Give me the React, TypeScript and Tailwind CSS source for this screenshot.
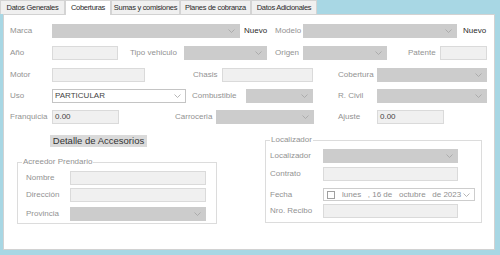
import type { ReactNode } from "react";

const Chevron = () => (
  <svg width="7" height="4" viewBox="0 0 7 4" className="shrink-0 mr-[4px]">
    <polyline points="0.5,0.5 3.5,3.5 6.5,0.5" fill="none" stroke="#a3a3a3" strokeWidth="0.8" />
  </svg>
);

function Label({ className = "", dark, children }: { className?: string; dark?: boolean; children: ReactNode }) {
  return (
    <span className={`shrink-0 whitespace-nowrap leading-[14px] ${dark ? "text-[#2b2b2b]" : "text-[#929292]"} ${className}`}>
      {children}
    </span>
  );
}

function Combo({ className = "", enabled, text }: { className?: string; enabled?: boolean; text?: string }) {
  return (
    <div
      className={`shrink-0 h-[14px] flex items-center justify-between border ${
        enabled ? "bg-white border-[#c4c4c4]" : "bg-[#cccccc] border-[#cccccc]"
      } ${className}`}
    >
      <span className="pl-[2px] text-[#444] leading-[12px]">{text}</span>
      <Chevron />
    </div>
  );
}

function TextBox({ className = "", text }: { className?: string; text?: string }) {
  return (
    <div className={`shrink-0 h-[14px] bg-[#f0f0f0] border border-[#dadada] flex items-center ${className}`}>
      <span className="pl-[2px] text-[#444] leading-[12px]">{text}</span>
    </div>
  );
}

const tabs = [
  { name: "Datos Generales", w: "w-[65px]" },
  { name: "Coberturas", w: "w-[46px]", active: true },
  { name: "Sumas y comisiones", w: "w-[69px]" },
  { name: "Planes de cobranza", w: "w-[71px]" },
  { name: "Datos Adicionales", w: "w-[66px]" },
];

export default function App() {
  return (
    <div className="w-[500px] h-[255px] bg-[#a8d7e4] overflow-hidden font-['Liberation_Sans',Arial,sans-serif] text-[8px]">
      {/* Tabs */}
      <div className="flex h-[14px] items-end">
        {tabs.map((t) => (
          <div
            key={t.name}
            className={`${t.w} shrink-0 text-center whitespace-nowrap text-[#2a2a2a] text-[7.5px] tracking-[-0.3px] border border-[#d4d4d4] border-b-0 leading-[13px] ${
              t.active ? "relative z-10 h-[15px] -mb-px bg-white" : "h-[14px] bg-[#f0f0f0]"
            }`}
          >
            {t.name}
          </div>
        ))}
      </div>

      {/* Panel */}
      <div className="ml-[3px] w-[492px] h-[236px] bg-white border border-[#d2d2d2]">
        {/* Row 1 */}
        <div className="flex items-center h-[14px] mt-[9px]">
          <Label className="ml-[6px] w-[42px]">Marca</Label>
          <Combo className="w-[188px]" />
          <Label dark className="ml-[4px] w-[31px]">Nuevo</Label>
          <Label className="w-[28px]">Modelo</Label>
          <Combo className="w-[154px]" />
          <Label dark className="ml-[6px]">Nuevo</Label>
        </div>

        {/* Row 2 */}
        <div className="flex items-center h-[14px] mt-[8px]">
          <Label className="ml-[6px] w-[42px]">Año</Label>
          <TextBox className="w-[66px]" />
          <Label className="ml-[12px] w-[54px]">Tipo vehiculo</Label>
          <Combo className="w-[83px]" />
          <Label className="ml-[8px] w-[28px]">Origen</Label>
          <Combo className="w-[84px]" />
          <Label className="ml-[21px] w-[32px]">Patente</Label>
          <TextBox className="w-[47px]" />
        </div>

        {/* Row 3 */}
        <div className="flex items-center h-[14px] mt-[8px]">
          <Label className="ml-[6px] w-[42px]">Motor</Label>
          <TextBox className="w-[93px]" />
          <Label className="ml-[48px] w-[29px]">Chasis</Label>
          <TextBox className="w-[91px]" />
          <Label className="ml-[25px] w-[39px]">Cobertura</Label>
          <Combo className="w-[110px]" />
        </div>

        {/* Row 4 */}
        <div className="flex items-center h-[14px] mt-[7px]">
          <Label className="ml-[6px] w-[42px]">Uso</Label>
          <Combo enabled text="PARTICULAR" className="w-[134px]" />
          <Label className="ml-[6px] w-[54px]">Combustible</Label>
          <Combo className="w-[67px]" />
          <Label className="ml-[25px] w-[39px]">R. Civil</Label>
          <Combo className="w-[110px]" />
        </div>

        {/* Row 5 */}
        <div className="flex items-center h-[14px] mt-[7px]">
          <Label className="ml-[6px] w-[42px]">Franquicia</Label>
          <TextBox text="0.00" className="w-[67px]" />
          <Label className="ml-[56px] w-[41px]">Carroceria</Label>
          <Combo className="w-[98px]" />
          <Label className="ml-[24px] w-[39px]">Ajuste</Label>
          <TextBox text="0.00" className="w-[67px]" />
        </div>

        {/* Lower section */}
        <div className="flex items-start">
          <div className="w-[213px] shrink-0 flex flex-col items-start">
            <button className="ml-[46px] mt-[11px] w-[97px] h-[12px] bg-[#dadada] text-[#333] text-[9.5px] leading-[12px] text-center whitespace-nowrap">
              Detalle de Accesorios
            </button>
            <fieldset className="ml-[13px] mt-[10px] w-[200px] border border-[#dcdcdc] pb-[2px]">
              <legend className="ml-[4px] px-[1px] leading-[10px] text-[#929292]">Acreedor Prendario</legend>
              <div className="flex items-center h-[14px] mt-[4px]">
                <Label className="ml-[8px] w-[44px]">Nombre</Label>
                <TextBox className="w-[136px]" />
              </div>
              <div className="flex items-center h-[14px] mt-[3px]">
                <Label className="ml-[8px] w-[44px]">Dirección</Label>
                <TextBox className="w-[136px]" />
              </div>
              <div className="flex items-center h-[14px] mt-[5px]">
                <Label className="ml-[8px] w-[44px]">Provincia</Label>
                <Combo className="w-[136px]" />
              </div>
            </fieldset>
          </div>

          <fieldset className="ml-[48px] mt-[11px] w-[217px] shrink-0 border border-[#dcdcdc] pb-[4px]">
            <legend className="ml-[4px] px-[1px] leading-[10px] text-[#929292]">Localizador</legend>
            <div className="flex items-center h-[14px] mt-[4px]">
              <Label className="ml-[4px] w-[53px]">Localizador</Label>
              <Combo className="w-[135px]" />
            </div>
            <div className="flex items-center h-[14px] mt-[4px]">
              <Label className="ml-[4px] w-[53px]">Contrato</Label>
              <TextBox className="w-[135px]" />
            </div>
            <div className="flex items-center h-[13px] mt-[7px]">
              <Label className="ml-[4px] w-[53px]">Fecha</Label>
              <div className="shrink-0 w-[152px] h-[13px] bg-white border border-[#cdcdcd] flex items-center">
                <span className="ml-[3px] w-[8px] h-[8px] border border-[#a0a0a0] bg-white shrink-0" />
                <span className="ml-[7px] text-[#8f8f8f] whitespace-nowrap leading-[11px] flex-1">
                  lunes&nbsp;&nbsp;&nbsp;, 16 de&nbsp;&nbsp;&nbsp;octubre&nbsp;&nbsp;&nbsp;de 2023
                </span>
                <Chevron />
              </div>
            </div>
            <div className="flex items-center h-[14px] mt-[3px]">
              <Label className="ml-[4px] w-[53px]">Nro. Recibo</Label>
              <TextBox className="w-[135px]" />
            </div>
          </fieldset>
        </div>
      </div>
    </div>
  );
}
